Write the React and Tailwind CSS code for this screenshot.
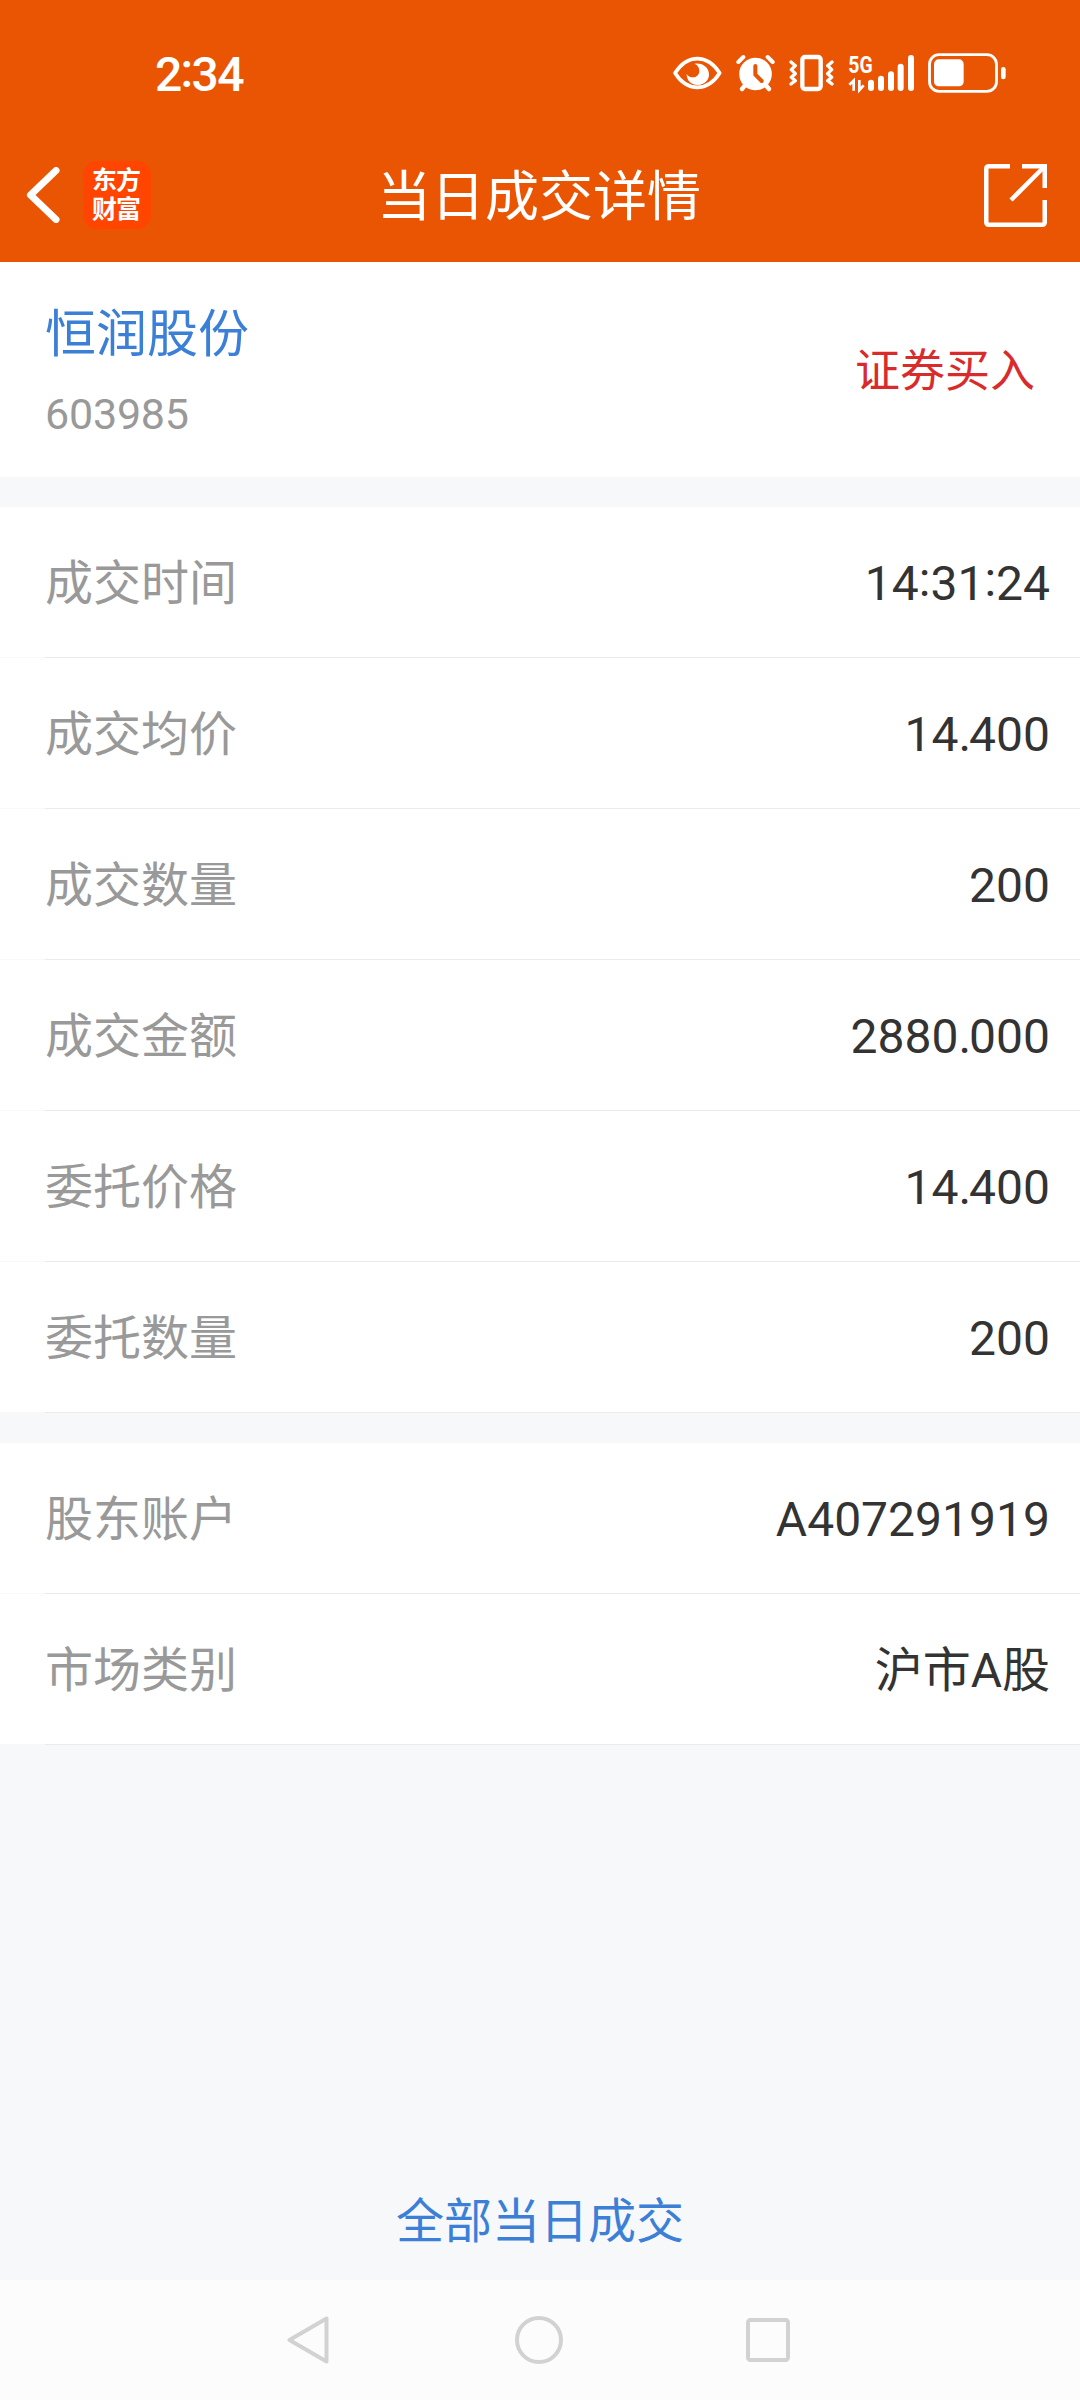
import React from "react";

const tradeRows = [
  { label: "成交时间", value: "14:31:24" },
  { label: "成交均价", value: "14.400" },
  { label: "成交数量", value: "200" },
  { label: "成交金额", value: "2880.000" },
  { label: "委托价格", value: "14.400" },
  { label: "委托数量", value: "200" },
];

const accountRows = [
  { label: "股东账户", value: "A407291919" },
  { label: "市场类别", value: "沪市A股" },
];

const EyeIcon = () => (
  <svg className="w-[50px] h-[42px]" viewBox="36 36 150 126" fill="none">
    <path d="M45 99 C62 73 84 56 112 56 C140 56 162 73 179 99 C162 126 140 142 112 142 C84 142 62 126 45 99 Z" stroke="#fff" strokeWidth="11" strokeLinejoin="round" />
    <path d="M104 71 C130 68 147 84 147 103 C147 121 134 135 113 135 C94 135 80 122 80 102 C84 109 91 112 98 112 C110 112 118 104 118 92 C118 83 113 75 104 71 Z" fill="#fff" />
  </svg>
);

const AlarmIcon = () => (
  <svg className="w-[39px] h-[42px]" viewBox="228 36 117 126" fill="none">
    <circle cx="286.500" cy="102" r="49" fill="#fff" />
    <path d="M235 66 L250 51 M338 66 L323 51" stroke="#fff" strokeWidth="12" strokeLinecap="round" />
    <path d="M246 147 L256 135 M327 147 L317 135" stroke="#fff" strokeWidth="13" strokeLinecap="round" />
    <path d="M286 78 V104 L305 123" stroke="#ea5504" strokeWidth="12" strokeLinecap="round" strokeLinejoin="round" />
  </svg>
);

const VibrateIcon = () => (
  <svg className="w-[45px] h-[42px]" viewBox="387 36 135 126" fill="none" stroke="#fff" strokeLinejoin="round" strokeLinecap="round">
    <rect x="427" y="51" width="55" height="96" rx="8" strokeWidth="13" />
    <path d="M393 66 L406 77 L394 89 L406 101 L394 112 L406 122 L393 132" strokeWidth="10" />
    <path d="M516 66 L503 77 L515 89 L503 101 L515 112 L503 122 L516 132" strokeWidth="10" />
  </svg>
);

const SignalIcon = () => (
  <svg className="w-[66px] h-[42px]" viewBox="564 36 198 126" fill="none">
    <text x="565" y="98" fill="#fff" className="font-['Roboto',sans-serif] font-bold" fontSize="72" textLength="73" lengthAdjust="spacingAndGlyphs">5G</text>
    <path d="M568 134 L581 122 V152" stroke="#fff" strokeWidth="8" />
    <path d="M598 120 V150 L611 136" stroke="#fff" strokeWidth="8" />
    <path d="M633 128 V144 M663 116 V144 M693 103 V144 M722 80 V144 M753 54 V144" stroke="#fff" strokeWidth="18" strokeLinecap="round" />
  </svg>
);

const BatteryIcon = () => (
  <svg className="w-[78px] h-[42px]" viewBox="804 36 234 126" fill="none">
    <rect x="808.500" y="44" width="201" height="110" rx="29" stroke="#fff" strokeWidth="8.500" />
    <rect x="822" y="58" width="89" height="81" rx="14" fill="#fff" />
    <rect x="1023" y="81" width="14" height="37" rx="7" fill="#fff" />
  </svg>
);

const StatusBar = () => (
  <div className="h-[128px] pt-[18px] pl-[155px] pr-[74px] flex items-center justify-between">
    <span className="pt-[3px] font-['Roboto',sans-serif] font-medium text-5xl tracking-[-1.7px]">
      2<span className="relative -top-1">:</span>34
    </span>
    <div className="flex items-center gap-3.5">
      <EyeIcon />
      <AlarmIcon />
      <VibrateIcon />
      <SignalIcon />
      <BatteryIcon />
    </div>
  </div>
);

const TitleBar = () => (
  <div className="h-[134px] pl-[26px] pr-[33px] grid grid-cols-[1fr_auto_1fr] items-center">
    <div className="flex items-center gap-[23px]">
      <button type="button" aria-label="返回">
        <svg className="w-[34px] h-[56px]" viewBox="0 0 34 56" fill="none">
          <path d="M30 3.500 L4.500 28 L30 52.500" stroke="#fff" strokeWidth="7" strokeLinecap="round" strokeLinejoin="round" />
        </svg>
      </button>
      <div className="w-[68px] h-[68px] pr-0.5 rounded-[14px] bg-[#ff4500] flex flex-col items-center justify-center text-[25px] leading-[29px] tracking-[-1px] font-bold">
        <span>东方</span>
        <span>财富</span>
      </div>
    </div>
    <h1 className="pt-[5px] pl-[5px] text-[54px] leading-none">当日成交详情</h1>
    <button type="button" className="justify-self-end" aria-label="分享">
      <svg className="w-[63px] h-[63px]" viewBox="0 0 63 63" fill="none" stroke="#fff" strokeWidth="4.500">
        <path d="M26 2.250 H5 Q2.250 2.250 2.250 5 V58 Q2.250 60.750 5 60.750 H58 Q60.750 60.750 60.750 58 V36" />
        <path d="M38 2.250 H60.750 V24" />
        <path d="M27 36 L60 3" />
      </svg>
    </button>
  </div>
);

// colons sit at mid height of the digits, decimal points take less room
const Value = ({ text }) => (
  <span className="pt-[3px] text-5xl leading-none text-[#333333]">
    {text.split("").map((char, index) => {
      if (char === ":") {
        return <span key={index} className="relative -top-1">:</span>;
      }
      if (char === ".") {
        return <span key={index} className="tracking-[-2px]">.</span>;
      }
      return char;
    })}
  </span>
);

const DetailList = ({ rows }) => (
  <div className="bg-white">
    {rows.map((row) => (
      <div key={row.label}>
        <div className="h-[150px] pl-[45px] pr-[30px] flex items-center justify-between">
          <span className="pt-[3px] text-5xl leading-none text-[#999999]">{row.label}</span>
          <Value text={row.value} />
        </div>
        <div className="h-px pl-[45px] bg-[#f7f8fa]">
          <div className="h-px bg-[#ebebeb]" />
        </div>
      </div>
    ))}
  </div>
);

const NavBar = () => (
  <div className="h-[120px] pr-[3px] bg-[#fcfcfc] flex items-center justify-center">
    <svg className="w-[42px] h-12" viewBox="0 0 42 48" fill="none" stroke="#d2d2d2" strokeWidth="4" strokeLinejoin="round">
      <path d="M39.500 2.500 V45.500 L2.500 24 Z" />
    </svg>
    <svg className="w-12 h-12 ml-[186px] mr-[183px]" viewBox="0 0 48 48" fill="none" stroke="#d2d2d2" strokeWidth="4">
      <circle cx="24" cy="24" r="22" />
    </svg>
    <svg className="w-11 h-11" viewBox="0 0 44 44" fill="none" stroke="#d2d2d2" strokeWidth="4">
      <rect x="2" y="2" width="40" height="40" rx="2.500" />
    </svg>
  </div>
);

const App = () => {
  return (
    <div className="w-[1080px] h-[2400px] flex flex-col bg-[#f7f8fa] font-['Roboto','Noto_Sans_CJK_SC',sans-serif]">
      <header className="bg-[#ea5504] text-white">
        <StatusBar />
        <TitleBar />
      </header>

      <section className="h-[215px] bg-white pl-[45px] pr-[45px] flex items-center justify-between">
        <div className="pt-1 flex flex-col gap-6">
          <span className="text-[51px] leading-[60px] text-[#3b7fd6]">恒润股份</span>
          <span className="text-[43px] leading-[50px] tracking-[-0.2px] text-[#999999]">603985</span>
        </div>
        <span className="pt-1 text-[45px] leading-none text-[#d92b2b]">证券买入</span>
      </section>

      <main className="mt-[30px] flex flex-col gap-[30px]">
        <DetailList rows={tradeRows} />
        <DetailList rows={accountRows} />
      </main>

      <footer className="mt-auto">
        <div className="pb-[34px] text-center">
          <a className="text-5xl leading-none text-[#3b7fd6]">全部当日成交</a>
        </div>
        <NavBar />
      </footer>
    </div>
  );
};

export default App;
